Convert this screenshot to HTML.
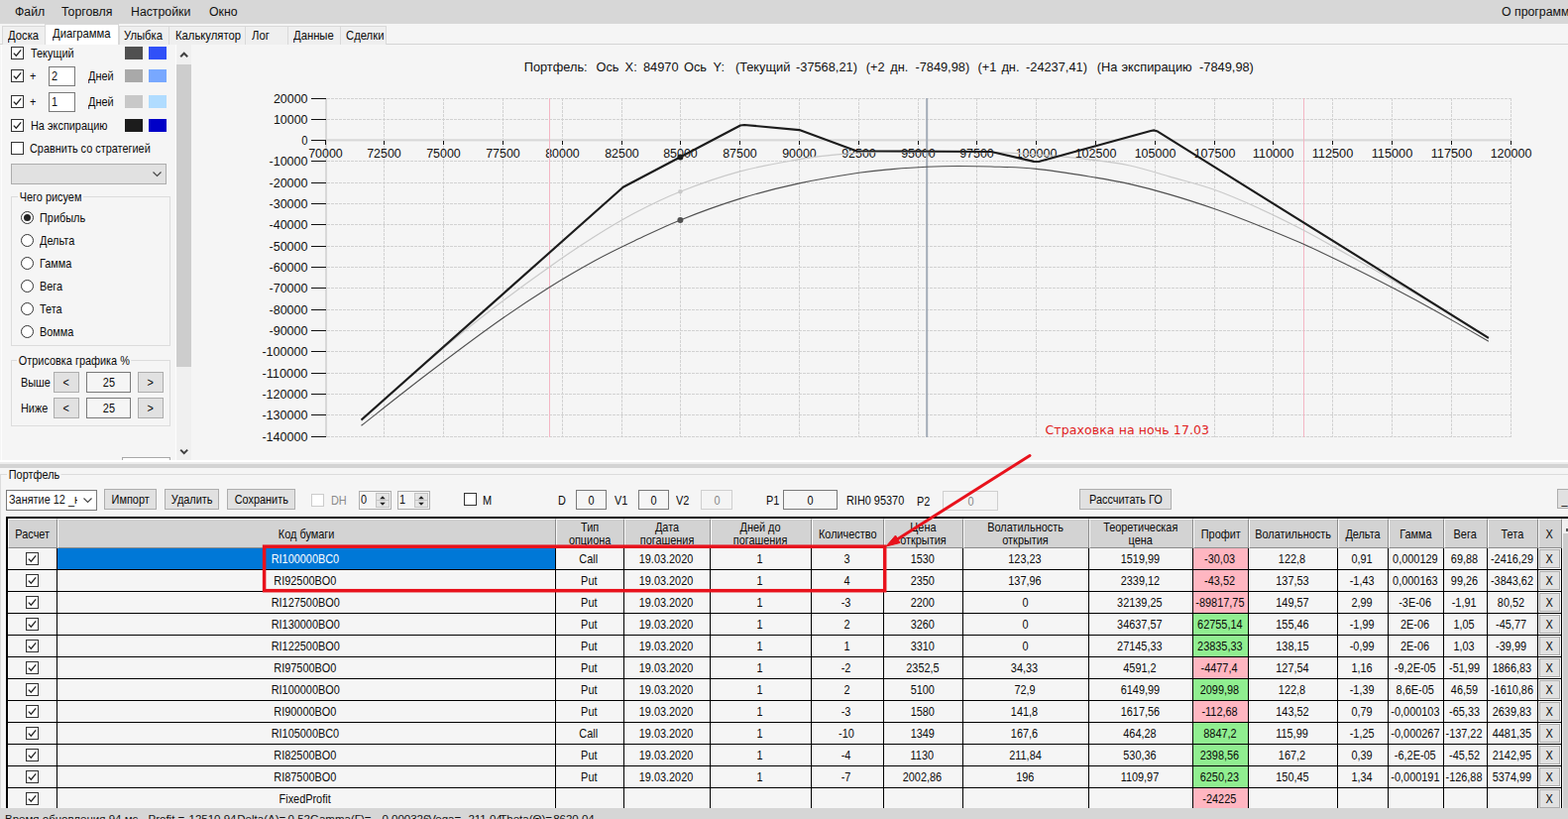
<!DOCTYPE html><html lang="ru"><head><meta charset="utf-8"><title>Options</title><style>
*{box-sizing:border-box;margin:0;padding:0}
html,body{width:1582px;height:826px;overflow:hidden;background:#f5f5f5}
body{position:relative;font-family:"Liberation Sans",sans-serif;font-size:11px;color:#111}
div{position:absolute;white-space:nowrap}
.t{font-size:12.4px;line-height:13px;color:#0a0a0a;transform:scaleX(.88);transform-origin:0 50%;margin-top:1px}
.tb{transform:scaleX(.91)}
.s{display:inline-block;transform:scaleX(.88);transform-origin:50% 50%;position:static}
.sl{display:inline-block;transform:scaleX(.88);transform-origin:0 50%;position:static}
.m{font-size:12.3px;line-height:14px;color:#111}
.cb{width:13px;height:13px;border:1px solid #333;background:#fff}
.cb.dis{border-color:#ccc}
.ck{position:absolute;left:-1px;top:-1px;width:13px;height:13px}
.sw{width:18px;height:12px}
.inp{background:#fff;border:1px solid #7a7a7a;font-size:12.4px;line-height:18px;padding-left:4px}
.inp.c{text-align:center;padding-left:0}
.inp.dis{border-color:#cfcfcf;color:#888;background:#f4f4f4}
.btn{background:#e1e1e1;border:1px solid #adadad;text-align:center;font-size:12.4px;line-height:20px;color:#0a0a0a}
.rd{width:13px;height:13px;border:1px solid #333;border-radius:50%;background:#fff}
.rd.on::after{content:"";position:absolute;left:2px;top:2px;width:7px;height:7px;border-radius:50%;background:#222}
.gb{border:1px solid #dcdcdc}
.gbl{background:#f5f5f5;padding:0 2px;font-size:12.4px;line-height:13px;color:#0a0a0a;transform:scaleX(.88);transform-origin:0 50%;margin-top:1px}
.hc{background:#d3d3d3;text-align:center;font-size:12.4px;line-height:12.6px;color:#0a0a0a;display:flex;align-items:center;justify-content:center;border-left:1px solid #fafafa;border-top:1px solid #fafafa;border-right:1px solid #8c8c8c;border-bottom:1px solid #8c8c8c}
.hc .s{position:relative;left:-0.5px;top:0.5px}
.c{text-align:center;font-size:12.4px;line-height:21px;color:#0a0a0a;background:#f5f5f5}
.tc .s{position:relative;left:-1px;top:1px}
.vl{background:#000;width:1px}
.hl{background:#000;height:1px}
</style></head><body>
<div class="" style="left:0px;top:0px;width:1582px;height:24px;background:#d7d7d7"></div>
<div class="m" style="left:15px;top:5px;">Файл</div>
<div class="m" style="left:62px;top:5px;">Торговля</div>
<div class="m" style="left:132px;top:5px;">Настройки</div>
<div class="m" style="left:211px;top:5px;">Окно</div>
<div class="m" style="left:1515px;top:5px;">О программе</div>
<div class="" style="left:0px;top:44px;width:1582px;height:1px;background:#d4d4d4"></div>
<div class="" style="left:2px;top:26px;width:44px;height:19px;background:#efefef;border:1px solid #d9d9d9;border-bottom:none"></div>
<div class="t tb" style="left:7.7px;top:29px;">Доска</div>
<div class="" style="left:120px;top:26px;width:51px;height:19px;background:#efefef;border:1px solid #d9d9d9;border-bottom:none"></div>
<div class="t tb" style="left:125px;top:29px;">Улыбка</div>
<div class="" style="left:170px;top:26px;width:78px;height:19px;background:#efefef;border:1px solid #d9d9d9;border-bottom:none"></div>
<div class="t tb" style="left:177.3px;top:29px;">Калькулятор</div>
<div class="" style="left:247px;top:26px;width:44px;height:19px;background:#efefef;border:1px solid #d9d9d9;border-bottom:none"></div>
<div class="t tb" style="left:254px;top:29px;">Лог</div>
<div class="" style="left:290px;top:26px;width:54px;height:19px;background:#efefef;border:1px solid #d9d9d9;border-bottom:none"></div>
<div class="t tb" style="left:296.3px;top:29px;">Данные</div>
<div class="" style="left:343px;top:26px;width:47px;height:19px;background:#efefef;border:1px solid #d9d9d9;border-bottom:none"></div>
<div class="t tb" style="left:348.5px;top:29px;">Сделки</div>
<div class="" style="left:45px;top:24px;width:75px;height:21px;background:#fff;border:1px solid #d9d9d9;border-bottom:none"></div>
<div class="t tb" style="left:53px;top:27px;">Диаграмма</div>
<div class="" style="left:0px;top:45px;width:195px;height:420px;background:#f5f5f5"></div>
<div class="" style="left:1px;top:45px;width:1px;height:420px;background:#fdfdfd"></div>
<div class="" style="left:177px;top:45px;width:1px;height:420px;background:#fdfdfd"></div>
<div class="cb" style="left:11px;top:47px"><svg class="ck" viewBox="0 0 13 13"><path d="M2.8 6.6 L5.3 9.2 L10.2 3.4" fill="none" stroke="#222" stroke-width="1.3"/></svg></div>
<div class="t" style="left:31px;top:47px;">Текущий</div>
<div class="cb" style="left:11px;top:70px"><svg class="ck" viewBox="0 0 13 13"><path d="M2.8 6.6 L5.3 9.2 L10.2 3.4" fill="none" stroke="#222" stroke-width="1.3"/></svg></div>
<div class="t" style="left:30px;top:70px;">+</div>
<div class="inp" style="left:49px;top:67px;width:27px;height:20px;padding-left:2px"><span class="sl">2</span></div>
<div class="t" style="left:89px;top:70px;">Дней</div>
<div class="cb" style="left:11px;top:96px"><svg class="ck" viewBox="0 0 13 13"><path d="M2.8 6.6 L5.3 9.2 L10.2 3.4" fill="none" stroke="#222" stroke-width="1.3"/></svg></div>
<div class="t" style="left:30px;top:96px;">+</div>
<div class="inp" style="left:49px;top:93px;width:27px;height:20px;padding-left:2px"><span class="sl">1</span></div>
<div class="t" style="left:89px;top:96px;">Дней</div>
<div class="cb" style="left:11px;top:120px"><svg class="ck" viewBox="0 0 13 13"><path d="M2.8 6.6 L5.3 9.2 L10.2 3.4" fill="none" stroke="#222" stroke-width="1.3"/></svg></div>
<div class="t" style="left:31px;top:120px;">На экспирацию</div>
<div class="cb" style="left:11px;top:143px"></div>
<div class="t" style="left:30px;top:143px;">Сравнить со стратегией</div>
<div class="" style="left:126px;top:47px;width:18px;height:13px;background:#505050"></div>
<div class="" style="left:150px;top:47px;width:18px;height:13px;background:#3050f8"></div>
<div class="" style="left:126px;top:70px;width:18px;height:13px;background:#a9a9a9"></div>
<div class="" style="left:150px;top:70px;width:18px;height:13px;background:#78a8ff"></div>
<div class="" style="left:126px;top:96px;width:18px;height:13px;background:#c8c8c8"></div>
<div class="" style="left:150px;top:96px;width:18px;height:13px;background:#b0dcff"></div>
<div class="" style="left:126px;top:120px;width:18px;height:13px;background:#1c1c1c"></div>
<div class="" style="left:150px;top:120px;width:18px;height:13px;background:#0000c8"></div>
<div class="" style="left:11px;top:165px;width:157px;height:21px;background:#e1e1e1;border:1px solid #adadad"></div>
<svg style="position:absolute;left:154px;top:173px" width="9" height="6"><path d="M0.5 0.5 L4.5 4.5 L8.5 0.5" fill="none" stroke="#444" stroke-width="1.1"/></svg>
<div class="gb" style="left:11px;top:198px;width:161px;height:151px;"></div>
<div class="gbl" style="left:18px;top:192px;">Чего рисуем</div>
<div class="rd on" style="left:21px;top:213.0px"></div>
<div class="t" style="left:40px;top:212.5px;">Прибыль</div>
<div class="rd" style="left:21px;top:236.0px"></div>
<div class="t" style="left:40px;top:235.5px;">Дельта</div>
<div class="rd" style="left:21px;top:259.0px"></div>
<div class="t" style="left:40px;top:258.5px;">Гамма</div>
<div class="rd" style="left:21px;top:282.0px"></div>
<div class="t" style="left:40px;top:281.5px;">Вега</div>
<div class="rd" style="left:21px;top:305.0px"></div>
<div class="t" style="left:40px;top:304.5px;">Тета</div>
<div class="rd" style="left:21px;top:328.0px"></div>
<div class="t" style="left:40px;top:327.5px;">Вомма</div>
<div class="gb" style="left:11px;top:363px;width:161px;height:67px;"></div>
<div class="gbl" style="left:17px;top:357px;">Отрисовка графика %</div>
<div class="t" style="left:21px;top:379px;">Выше</div>
<div class="btn" style="left:54px;top:375px;width:26px;height:21px;"><span class="s">&lt;</span></div>
<div class="inp c" style="left:87px;top:375px;width:45px;height:21px;background:#f5f5f5"><span class="s">25</span></div>
<div class="btn" style="left:139px;top:375px;width:26px;height:21px;"><span class="s">&gt;</span></div>
<div class="t" style="left:21px;top:405px;">Ниже</div>
<div class="btn" style="left:54px;top:401px;width:26px;height:21px;"><span class="s">&lt;</span></div>
<div class="inp c" style="left:87px;top:401px;width:45px;height:21px;background:#f5f5f5"><span class="s">25</span></div>
<div class="btn" style="left:139px;top:401px;width:26px;height:21px;"><span class="s">&gt;</span></div>
<div class="" style="left:123px;top:461px;width:49px;height:6px;background:#fff;border:1px solid #a8a8a8;border-bottom:none"></div>
<div class="" style="left:178px;top:45px;width:15px;height:419px;background:#f0f0f0"></div>
<div class="" style="left:178px;top:65px;width:15px;height:305px;background:#cdcdcd"></div>
<svg style="position:absolute;left:181px;top:51px" width="9" height="8"><path d="M1.2 6.2 L4.7 2.7 L8.2 6.2" fill="none" stroke="#404040" stroke-width="2"/></svg>
<svg style="position:absolute;left:181px;top:451px" width="9" height="8"><path d="M1.2 2.6 L4.7 6.1 L8.2 2.6" fill="none" stroke="#404040" stroke-width="2"/></svg>
<svg style="position:absolute;left:0;top:45px" width="1582" height="419" viewBox="0 45 1582 419" font-family="Liberation Sans, sans-serif"><path d="M387.5 99 V441 M447.5 99 V441 M507.5 99 V441 M567.5 99 V441 M627.5 99 V441 M686.5 99 V441 M746.5 99 V441 M806.5 99 V441 M866.5 99 V441 M926.5 99 V441 M985.5 99 V441 M1045.5 99 V441 M1105.5 99 V441 M1165.5 99 V441 M1225.5 99 V441 M1284.5 99 V441 M1344.5 99 V441 M1404.5 99 V441 M1464.5 99 V441 M1524.5 99 V441" stroke="#d2d2d2" stroke-width="1" stroke-dasharray="3 1" fill="none" shape-rendering="crispEdges"/><path d="M330 440.5 H1525 M330 418.5 H1525 M330 397.5 H1525 M330 376.5 H1525 M330 354.5 H1525 M330 333.5 H1525 M330 312.5 H1525 M330 290.5 H1525 M330 269.5 H1525 M330 248.5 H1525 M330 226.5 H1525 M330 205.5 H1525 M330 184.5 H1525 M330 162.5 H1525 M330 120.5 H1525 M330 99.5 H1525" stroke="#d2d2d2" stroke-width="1" stroke-dasharray="3 1" fill="none" shape-rendering="crispEdges"/><rect x="328" y="99" width="2" height="342" fill="#d8d8d8"/><rect x="328" y="140.3" width="1196.5" height="2.1" fill="#d8d8d8"/><path d="M314 440.5 H329 M314 418.5 H329 M314 397.5 H329 M314 376.5 H329 M314 354.5 H329 M314 333.5 H329 M314 312.5 H329 M314 290.5 H329 M314 269.5 H329 M314 248.5 H329 M314 226.5 H329 M314 205.5 H329 M314 184.5 H329 M314 162.5 H329 M314 141.5 H329 M314 120.5 H329 M314 99.5 H329 M328.5 141 V146 M387.5 142 V146 M447.5 142 V146 M507.5 142 V146 M567.5 142 V146 M627.5 142 V146 M686.5 142 V146 M746.5 142 V146 M806.5 142 V146 M866.5 142 V146 M926.5 142 V146 M985.5 142 V146 M1045.5 142 V146 M1105.5 142 V146 M1165.5 142 V146 M1225.5 142 V146 M1284.5 142 V146 M1344.5 142 V146 M1404.5 142 V146 M1464.5 142 V146 M1524.5 142 V146" stroke="#111" stroke-width="1" fill="none" shape-rendering="crispEdges"/><text x="310.5" y="445.3" font-size="13.4" text-anchor="end" fill="#111" textLength="46.1" lengthAdjust="spacingAndGlyphs">-140000</text><text x="310.5" y="423.3" font-size="13.4" text-anchor="end" fill="#111" textLength="46.1" lengthAdjust="spacingAndGlyphs">-130000</text><text x="310.5" y="402.3" font-size="13.4" text-anchor="end" fill="#111" textLength="46.1" lengthAdjust="spacingAndGlyphs">-120000</text><text x="310.5" y="381.3" font-size="13.4" text-anchor="end" fill="#111" textLength="46.1" lengthAdjust="spacingAndGlyphs">-110000</text><text x="310.5" y="359.3" font-size="13.4" text-anchor="end" fill="#111" textLength="46.1" lengthAdjust="spacingAndGlyphs">-100000</text><text x="310.5" y="338.3" font-size="13.4" text-anchor="end" fill="#111" textLength="39.0" lengthAdjust="spacingAndGlyphs">-90000</text><text x="310.5" y="317.3" font-size="13.4" text-anchor="end" fill="#111" textLength="39.0" lengthAdjust="spacingAndGlyphs">-80000</text><text x="310.5" y="295.3" font-size="13.4" text-anchor="end" fill="#111" textLength="39.0" lengthAdjust="spacingAndGlyphs">-70000</text><text x="310.5" y="274.3" font-size="13.4" text-anchor="end" fill="#111" textLength="39.0" lengthAdjust="spacingAndGlyphs">-60000</text><text x="310.5" y="253.3" font-size="13.4" text-anchor="end" fill="#111" textLength="39.0" lengthAdjust="spacingAndGlyphs">-50000</text><text x="310.5" y="231.3" font-size="13.4" text-anchor="end" fill="#111" textLength="39.0" lengthAdjust="spacingAndGlyphs">-40000</text><text x="310.5" y="210.3" font-size="13.4" text-anchor="end" fill="#111" textLength="39.0" lengthAdjust="spacingAndGlyphs">-30000</text><text x="310.5" y="189.3" font-size="13.4" text-anchor="end" fill="#111" textLength="39.0" lengthAdjust="spacingAndGlyphs">-20000</text><text x="310.5" y="167.3" font-size="13.4" text-anchor="end" fill="#111" textLength="39.0" lengthAdjust="spacingAndGlyphs">-10000</text><text x="310.5" y="146.3" font-size="13.4" text-anchor="end" fill="#111" textLength="6.2" lengthAdjust="spacingAndGlyphs">0</text><text x="310.5" y="125.3" font-size="13.4" text-anchor="end" fill="#111" textLength="34.6" lengthAdjust="spacingAndGlyphs">10000</text><text x="310.5" y="104.3" font-size="13.4" text-anchor="end" fill="#111" textLength="34.6" lengthAdjust="spacingAndGlyphs">20000</text><text x="328.5" y="158.9" font-size="13.4" text-anchor="middle" fill="#111" textLength="34.6" lengthAdjust="spacingAndGlyphs">70000</text><text x="387.5" y="158.9" font-size="13.4" text-anchor="middle" fill="#111" textLength="34.6" lengthAdjust="spacingAndGlyphs">72500</text><text x="447.5" y="158.9" font-size="13.4" text-anchor="middle" fill="#111" textLength="34.6" lengthAdjust="spacingAndGlyphs">75000</text><text x="507.5" y="158.9" font-size="13.4" text-anchor="middle" fill="#111" textLength="34.6" lengthAdjust="spacingAndGlyphs">77500</text><text x="567.5" y="158.9" font-size="13.4" text-anchor="middle" fill="#111" textLength="34.6" lengthAdjust="spacingAndGlyphs">80000</text><text x="627.5" y="158.9" font-size="13.4" text-anchor="middle" fill="#111" textLength="34.6" lengthAdjust="spacingAndGlyphs">82500</text><text x="686.5" y="158.9" font-size="13.4" text-anchor="middle" fill="#111" textLength="34.6" lengthAdjust="spacingAndGlyphs">85000</text><text x="746.5" y="158.9" font-size="13.4" text-anchor="middle" fill="#111" textLength="34.6" lengthAdjust="spacingAndGlyphs">87500</text><text x="806.5" y="158.9" font-size="13.4" text-anchor="middle" fill="#111" textLength="34.6" lengthAdjust="spacingAndGlyphs">90000</text><text x="866.5" y="158.9" font-size="13.4" text-anchor="middle" fill="#111" textLength="34.6" lengthAdjust="spacingAndGlyphs">92500</text><text x="926.5" y="158.9" font-size="13.4" text-anchor="middle" fill="#111" textLength="34.6" lengthAdjust="spacingAndGlyphs">95000</text><text x="985.5" y="158.9" font-size="13.4" text-anchor="middle" fill="#111" textLength="34.6" lengthAdjust="spacingAndGlyphs">97500</text><text x="1045.5" y="158.9" font-size="13.4" text-anchor="middle" fill="#111" textLength="41.7" lengthAdjust="spacingAndGlyphs">100000</text><text x="1105.5" y="158.9" font-size="13.4" text-anchor="middle" fill="#111" textLength="41.7" lengthAdjust="spacingAndGlyphs">102500</text><text x="1165.5" y="158.9" font-size="13.4" text-anchor="middle" fill="#111" textLength="41.7" lengthAdjust="spacingAndGlyphs">105000</text><text x="1225.5" y="158.9" font-size="13.4" text-anchor="middle" fill="#111" textLength="41.7" lengthAdjust="spacingAndGlyphs">107500</text><text x="1284.5" y="158.9" font-size="13.4" text-anchor="middle" fill="#111" textLength="41.7" lengthAdjust="spacingAndGlyphs">110000</text><text x="1344.5" y="158.9" font-size="13.4" text-anchor="middle" fill="#111" textLength="41.7" lengthAdjust="spacingAndGlyphs">112500</text><text x="1404.5" y="158.9" font-size="13.4" text-anchor="middle" fill="#111" textLength="41.7" lengthAdjust="spacingAndGlyphs">115000</text><text x="1464.5" y="158.9" font-size="13.4" text-anchor="middle" fill="#111" textLength="41.7" lengthAdjust="spacingAndGlyphs">117500</text><text x="1524.5" y="158.9" font-size="13.4" text-anchor="middle" fill="#111" textLength="41.7" lengthAdjust="spacingAndGlyphs">120000</text><path d="M554.5 99 V441 M1315.5 99 V441" stroke="#f4b6c4" stroke-width="1" shape-rendering="crispEdges"/><rect x="934.2" y="99" width="2" height="342" fill="#a4acb8"/><path d="M364.5 424.5 C376.8 413.6 415.4 378.2 438.0 359.0 C460.6 339.8 480.6 324.0 500.0 309.0 C519.5 294.0 538.0 280.6 554.7 268.9 C571.4 257.1 585.8 247.5 600.0 238.5 C614.2 229.5 625.6 222.6 640.0 215.0 C654.4 207.4 668.6 200.2 686.4 193.2 C704.2 186.2 726.6 178.3 746.6 172.9 C766.6 167.5 790.6 163.5 806.5 160.7 C822.4 157.9 832.1 157.3 842.0 156.2 C851.9 155.1 856.3 154.4 866.0 154.0 C875.7 153.6 877.7 153.6 900.0 153.5 C922.3 153.4 975.0 153.2 1000.0 153.6 C1025.0 154.0 1032.4 154.8 1050.0 156.2 C1067.6 157.5 1090.6 159.9 1105.6 161.7 C1120.6 163.5 1127.6 164.3 1140.0 167.0 C1152.4 169.7 1165.8 174.0 1180.0 178.1 C1194.2 182.2 1210.0 186.0 1225.0 191.3 C1240.0 196.6 1255.0 203.2 1270.0 210.0 C1285.0 216.8 1300.3 224.4 1315.3 232.2 C1330.3 240.0 1344.6 248.4 1360.0 257.0 C1375.4 265.6 1392.5 275.2 1407.5 284.0 C1422.5 292.8 1434.3 299.9 1450.0 309.5 C1465.7 319.1 1493.2 336.2 1501.9 341.5" stroke="#c9c9c9" stroke-width="1.2" fill="none"/><path d="M364.5 429.3 C375.4 420.8 407.4 395.2 430.0 378.0 C452.6 360.8 479.2 340.8 500.0 326.0 C520.8 311.2 538.0 300.0 554.7 289.5 C571.4 279.0 585.8 270.8 600.0 263.0 C614.2 255.2 625.6 249.8 640.0 243.0 C654.4 236.2 668.6 229.0 686.4 221.9 C704.2 214.8 726.6 206.6 746.6 200.4 C766.6 194.2 786.5 189.2 806.5 184.9 C826.5 180.6 850.9 176.7 866.5 174.3 C882.1 171.9 888.6 171.6 900.0 170.6 C911.4 169.6 923.8 168.7 935.0 168.2 C946.2 167.7 956.2 167.5 967.0 167.5 C977.8 167.5 986.9 167.5 1000.0 168.0 C1013.1 168.5 1028.0 168.6 1045.6 170.4 C1063.2 172.2 1089.9 176.6 1105.6 179.1 C1121.3 181.6 1127.6 182.8 1140.0 185.6 C1152.4 188.4 1165.8 191.9 1180.0 196.1 C1194.2 200.2 1210.0 205.3 1225.0 210.5 C1240.0 215.7 1255.0 221.5 1270.0 227.5 C1285.0 233.5 1300.3 239.6 1315.3 246.3 C1330.3 253.0 1344.6 260.0 1360.0 267.5 C1375.4 275.0 1392.5 283.7 1407.5 291.5 C1422.5 299.3 1434.3 305.7 1450.0 314.5 C1465.7 323.3 1493.2 339.2 1501.9 344.2" stroke="#505050" stroke-width="1.1" fill="none"/><path d="M364.5 423.5 L628.7 188.8 L747 126.5 L751 126 L806.5 131.1 L864 152.2 L1000 153 L1043 162.9 L1048 163 L1161 132 L1164.5 131.4 L1168 132.6 L1501.9 340.8" stroke="#1c1c1c" stroke-width="2.15" fill="none" stroke-linejoin="round"/><circle cx="686.4" cy="158.5" r="3" fill="#1c1c1c"/><circle cx="686.4" cy="193.2" r="2.2" fill="#c9c9c9"/><circle cx="686.4" cy="221.9" r="3" fill="#505050"/><text id="ttl" y="71.8" font-size="12.8" fill="#111"><tspan x="528.7">Портфель:</tspan> <tspan x="601.5">Ось</tspan> <tspan x="630.6">X:</tspan> <tspan x="649.0">84970</tspan> <tspan x="690.0">Ось</tspan> <tspan x="719.6">Y:</tspan> <tspan x="741.9">(Текущий</tspan> <tspan x="803.0">-37568,21)</tspan> <tspan x="873.7">(+2</tspan> <tspan x="898.3">дн.</tspan> <tspan x="923.4">-7849,98)</tspan> <tspan x="986.6">(+1</tspan> <tspan x="1010.4">дн.</tspan> <tspan x="1035.0">-24237,41)</tspan> <tspan x="1106.7">(На</tspan> <tspan x="1131.6">экспирацию</tspan> <tspan x="1210.1">-7849,98)</tspan></text><text x="1054.5" y="437.8" font-size="12.5" fill="#e01d1d" textLength="165.5" font-family="DejaVu Sans, Liberation Sans, sans-serif">Страховка на ночь 17.03</text></svg>
<div class="" style="left:0px;top:464px;width:1582px;height:2px;background:#fff"></div>
<div class="" style="left:0px;top:466px;width:1582px;height:2px;background:#ececec"></div>
<div class="" style="left:0px;top:468px;width:1582px;height:4px;background:#d3d3d3"></div>
<div class="" style="left:0px;top:472px;width:1582px;height:345px;background:#f5f5f5"></div>
<div class="gb" style="left:0px;top:478px;width:1600px;height:345px;border-color:#dcdcdc"></div>
<div class="gbl" style="left:7px;top:472px;">Портфель</div>
<div class="inp" style="left:6px;top:494px;width:92px;height:21px;line-height:19px;padding-left:2px"><span class="sl">Занятие 12 _н</span></div>
<div class="" style="left:78px;top:495px;width:19px;height:19px;background:#fff"></div>
<svg style="position:absolute;left:84px;top:502px" width="9" height="6"><path d="M0.5 0.5 L4.5 4.5 L8.5 0.5" fill="none" stroke="#444" stroke-width="1.1"/></svg>
<div class="btn" style="left:105px;top:493px;width:53px;height:21px;"><span class="s">Импорт</span></div>
<div class="btn" style="left:166px;top:493px;width:55px;height:21px;"><span class="s">Удалить</span></div>
<div class="btn" style="left:229px;top:493px;width:69px;height:21px;"><span class="s">Сохранить</span></div>
<div class="cb dis" style="left:314px;top:498px"></div>
<div class="t" style="left:334px;top:498px;color:#8a8a8a">DH</div>
<div class="inp" style="left:362px;top:495px;width:33px;height:19px;line-height:17px;padding-left:1px;border-color:#adadad;background:#f5f5f5"><span class="sl">0</span></div>
<div class="" style="left:379px;top:497px;width:14px;height:15px;background:#e4e4e4;border:1px solid #c4c4c4"></div>
<svg style="position:absolute;left:382px;top:499px" width="8" height="12"><path d="M1.2 4.3 L4 1.2 L6.8 4.3 Z M1.2 7.7 L4 10.8 L6.8 7.7 Z" fill="#222"/></svg>
<div class="" style="left:379px;top:504px;width:14px;height:1px;background:#c4c4c4"></div>
<div class="inp" style="left:401px;top:495px;width:33px;height:19px;line-height:17px;padding-left:1px;border-color:#adadad;background:#f5f5f5"><span class="sl">1</span></div>
<div class="" style="left:418px;top:497px;width:14px;height:15px;background:#e4e4e4;border:1px solid #c4c4c4"></div>
<svg style="position:absolute;left:421px;top:499px" width="8" height="12"><path d="M1.2 4.3 L4 1.2 L6.8 4.3 Z M1.2 7.7 L4 10.8 L6.8 7.7 Z" fill="#222"/></svg>
<div class="" style="left:418px;top:504px;width:14px;height:1px;background:#c4c4c4"></div>
<div class="cb" style="left:468px;top:497px"></div>
<div class="t" style="left:487px;top:498px;">M</div>
<div class="t" style="left:563px;top:498px;">D</div>
<div class="inp c" style="left:581px;top:494px;width:31px;height:20px;"><span class="s">0</span></div>
<div class="t" style="left:620px;top:498px;">V1</div>
<div class="inp c" style="left:644px;top:494px;width:31px;height:20px;"><span class="s">0</span></div>
<div class="t" style="left:682px;top:498px;">V2</div>
<div class="inp c dis" style="left:707px;top:494px;width:32px;height:20px;"><span class="s">0</span></div>
<div class="t" style="left:773px;top:498px;">P1</div>
<div class="inp c" style="left:790px;top:494px;width:55px;height:20px;"><span class="s">0</span></div>
<div class="t" style="left:854px;top:498px;">RIH0 95370</div>
<div class="t" style="left:925px;top:499px;">P2</div>
<div class="inp c dis" style="left:951px;top:495px;width:56px;height:20px;"><span class="s">0</span></div>
<div class="btn" style="left:1089px;top:493px;width:93px;height:21px;"><span class="s">Рассчитать ГО</span></div>
<div class="btn" style="left:1571px;top:493px;width:20px;height:20px;text-align:left;padding-left:3px"><span class="s">_</span></div>
<div class="" style="left:6px;top:521px;width:1576px;height:300px;background:#f5f5f5"></div>
<div class="" style="left:6px;top:521px;width:1576px;height:2px;background:#000"></div>
<div class="" style="left:6px;top:521px;width:2px;height:300px;background:#000"></div>
<div class="" style="left:8px;top:523px;width:1568px;height:30px;background:#d3d3d3"></div>
<div class="hc" style="left:8px;top:523px;width:50px;height:30px;"><span class="s" style=top:1.5px>Расчет</span></div>
<div class="hc" style="left:58px;top:523px;width:503px;height:30px;"><span class="s" style=top:1.5px>Код бумаги</span></div>
<div class="hc" style="left:561px;top:523px;width:69px;height:30px;"><span class="s">Тип<br>опциона</span></div>
<div class="hc" style="left:630px;top:523px;width:87px;height:30px;"><span class="s">Дата<br>погашения</span></div>
<div class="hc" style="left:717px;top:523px;width:102px;height:30px;"><span class="s">Дней до<br>погашения</span></div>
<div class="hc" style="left:819px;top:523px;width:73px;height:30px;"><span class="s" style=top:1.5px>Количество</span></div>
<div class="hc" style="left:892px;top:523px;width:80px;height:30px;"><span class="s">Цена<br>открытия</span></div>
<div class="hc" style="left:972px;top:523px;width:127px;height:30px;"><span class="s">Волатильность<br>открытия</span></div>
<div class="hc" style="left:1099px;top:523px;width:105px;height:30px;"><span class="s">Теоретическая<br>цена</span></div>
<div class="hc" style="left:1204px;top:523px;width:56px;height:30px;"><span class="s" style=top:1.5px>Профит</span></div>
<div class="hc" style="left:1260px;top:523px;width:90px;height:30px;"><span class="s" style=top:1.5px>Волатильность</span></div>
<div class="hc" style="left:1350px;top:523px;width:51px;height:30px;"><span class="s" style=top:1.5px>Дельта</span></div>
<div class="hc" style="left:1401px;top:523px;width:56px;height:30px;"><span class="s" style=top:1.5px>Гамма</span></div>
<div class="hc" style="left:1457px;top:523px;width:44px;height:30px;"><span class="s" style=top:1.5px>Вега</span></div>
<div class="hc" style="left:1501px;top:523px;width:51px;height:30px;"><span class="s" style=top:1.5px>Тета</span></div>
<div class="hc" style="left:1552px;top:523px;width:24px;height:30px;"><span class="s" style=top:1.5px>X</span></div>
<div class="cb" style="left:26px;top:557px"><svg class="ck" viewBox="0 0 13 13"><path d="M2.8 6.6 L5.3 9.2 L10.2 3.4" fill="none" stroke="#222" stroke-width="1.3"/></svg></div>
<div class="c tc" style="left:58px;top:553px;width:502px;height:21px;background:#0078d7;color:#fff;"><span class="s">RI100000BC0</span></div>
<div class="c tc" style="left:561px;top:553px;width:68px;height:21px;"><span class="s">Call</span></div>
<div class="c tc" style="left:630px;top:553px;width:86px;height:21px;"><span class="s">19.03.2020</span></div>
<div class="c tc" style="left:717px;top:553px;width:101px;height:21px;"><span class="s">1</span></div>
<div class="c tc" style="left:819px;top:553px;width:72px;height:21px;"><span class="s">3</span></div>
<div class="c tc" style="left:892px;top:553px;width:79px;height:21px;"><span class="s">1530</span></div>
<div class="c tc" style="left:972px;top:553px;width:126px;height:21px;"><span class="s">123,23</span></div>
<div class="c tc" style="left:1099px;top:553px;width:104px;height:21px;"><span class="s">1519,99</span></div>
<div class="c tc" style="left:1204px;top:553px;width:55px;height:21px;background:#ffb6c1;"><span class="s">-30,03</span></div>
<div class="c tc" style="left:1260px;top:553px;width:89px;height:21px;"><span class="s">122,8</span></div>
<div class="c tc" style="left:1350px;top:553px;width:50px;height:21px;"><span class="s">0,91</span></div>
<div class="c tc" style="left:1401px;top:553px;width:55px;height:21px;"><span class="s">0,000129</span></div>
<div class="c tc" style="left:1457px;top:553px;width:43px;height:21px;"><span class="s">69,88</span></div>
<div class="c tc" style="left:1501px;top:553px;width:50px;height:21px;"><span class="s">-2416,29</span></div>
<div class="btn" style="left:1553px;top:554px;width:21px;height:19px;line-height:18px"><span class="s">X</span></div>
<div class="hl" style="left:8px;top:574px;width:1568px;height:1px;"></div>
<div class="cb" style="left:26px;top:579px"><svg class="ck" viewBox="0 0 13 13"><path d="M2.8 6.6 L5.3 9.2 L10.2 3.4" fill="none" stroke="#222" stroke-width="1.3"/></svg></div>
<div class="c tc" style="left:58px;top:575px;width:502px;height:21px;"><span class="s">RI92500BO0</span></div>
<div class="c tc" style="left:561px;top:575px;width:68px;height:21px;"><span class="s">Put</span></div>
<div class="c tc" style="left:630px;top:575px;width:86px;height:21px;"><span class="s">19.03.2020</span></div>
<div class="c tc" style="left:717px;top:575px;width:101px;height:21px;"><span class="s">1</span></div>
<div class="c tc" style="left:819px;top:575px;width:72px;height:21px;"><span class="s">4</span></div>
<div class="c tc" style="left:892px;top:575px;width:79px;height:21px;"><span class="s">2350</span></div>
<div class="c tc" style="left:972px;top:575px;width:126px;height:21px;"><span class="s">137,96</span></div>
<div class="c tc" style="left:1099px;top:575px;width:104px;height:21px;"><span class="s">2339,12</span></div>
<div class="c tc" style="left:1204px;top:575px;width:55px;height:21px;background:#ffb6c1;"><span class="s">-43,52</span></div>
<div class="c tc" style="left:1260px;top:575px;width:89px;height:21px;"><span class="s">137,53</span></div>
<div class="c tc" style="left:1350px;top:575px;width:50px;height:21px;"><span class="s">-1,43</span></div>
<div class="c tc" style="left:1401px;top:575px;width:55px;height:21px;"><span class="s">0,000163</span></div>
<div class="c tc" style="left:1457px;top:575px;width:43px;height:21px;"><span class="s">99,26</span></div>
<div class="c tc" style="left:1501px;top:575px;width:50px;height:21px;"><span class="s">-3843,62</span></div>
<div class="btn" style="left:1553px;top:576px;width:21px;height:19px;line-height:18px"><span class="s">X</span></div>
<div class="hl" style="left:8px;top:596px;width:1568px;height:1px;"></div>
<div class="cb" style="left:26px;top:601px"><svg class="ck" viewBox="0 0 13 13"><path d="M2.8 6.6 L5.3 9.2 L10.2 3.4" fill="none" stroke="#222" stroke-width="1.3"/></svg></div>
<div class="c tc" style="left:58px;top:597px;width:502px;height:21px;"><span class="s">RI127500BO0</span></div>
<div class="c tc" style="left:561px;top:597px;width:68px;height:21px;"><span class="s">Put</span></div>
<div class="c tc" style="left:630px;top:597px;width:86px;height:21px;"><span class="s">19.03.2020</span></div>
<div class="c tc" style="left:717px;top:597px;width:101px;height:21px;"><span class="s">1</span></div>
<div class="c tc" style="left:819px;top:597px;width:72px;height:21px;"><span class="s">-3</span></div>
<div class="c tc" style="left:892px;top:597px;width:79px;height:21px;"><span class="s">2200</span></div>
<div class="c tc" style="left:972px;top:597px;width:126px;height:21px;"><span class="s">0</span></div>
<div class="c tc" style="left:1099px;top:597px;width:104px;height:21px;"><span class="s">32139,25</span></div>
<div class="c tc" style="left:1204px;top:597px;width:55px;height:21px;background:#ffb6c1;"><span class="s">-89817,75</span></div>
<div class="c tc" style="left:1260px;top:597px;width:89px;height:21px;"><span class="s">149,57</span></div>
<div class="c tc" style="left:1350px;top:597px;width:50px;height:21px;"><span class="s">2,99</span></div>
<div class="c tc" style="left:1401px;top:597px;width:55px;height:21px;"><span class="s">-3E-06</span></div>
<div class="c tc" style="left:1457px;top:597px;width:43px;height:21px;"><span class="s">-1,91</span></div>
<div class="c tc" style="left:1501px;top:597px;width:50px;height:21px;"><span class="s">80,52</span></div>
<div class="btn" style="left:1553px;top:598px;width:21px;height:19px;line-height:18px"><span class="s">X</span></div>
<div class="hl" style="left:8px;top:618px;width:1568px;height:1px;"></div>
<div class="cb" style="left:26px;top:623px"><svg class="ck" viewBox="0 0 13 13"><path d="M2.8 6.6 L5.3 9.2 L10.2 3.4" fill="none" stroke="#222" stroke-width="1.3"/></svg></div>
<div class="c tc" style="left:58px;top:619px;width:502px;height:21px;"><span class="s">RI130000BO0</span></div>
<div class="c tc" style="left:561px;top:619px;width:68px;height:21px;"><span class="s">Put</span></div>
<div class="c tc" style="left:630px;top:619px;width:86px;height:21px;"><span class="s">19.03.2020</span></div>
<div class="c tc" style="left:717px;top:619px;width:101px;height:21px;"><span class="s">1</span></div>
<div class="c tc" style="left:819px;top:619px;width:72px;height:21px;"><span class="s">2</span></div>
<div class="c tc" style="left:892px;top:619px;width:79px;height:21px;"><span class="s">3260</span></div>
<div class="c tc" style="left:972px;top:619px;width:126px;height:21px;"><span class="s">0</span></div>
<div class="c tc" style="left:1099px;top:619px;width:104px;height:21px;"><span class="s">34637,57</span></div>
<div class="c tc" style="left:1204px;top:619px;width:55px;height:21px;background:#90ee90;"><span class="s">62755,14</span></div>
<div class="c tc" style="left:1260px;top:619px;width:89px;height:21px;"><span class="s">155,46</span></div>
<div class="c tc" style="left:1350px;top:619px;width:50px;height:21px;"><span class="s">-1,99</span></div>
<div class="c tc" style="left:1401px;top:619px;width:55px;height:21px;"><span class="s">2E-06</span></div>
<div class="c tc" style="left:1457px;top:619px;width:43px;height:21px;"><span class="s">1,05</span></div>
<div class="c tc" style="left:1501px;top:619px;width:50px;height:21px;"><span class="s">-45,77</span></div>
<div class="btn" style="left:1553px;top:620px;width:21px;height:19px;line-height:18px"><span class="s">X</span></div>
<div class="hl" style="left:8px;top:640px;width:1568px;height:1px;"></div>
<div class="cb" style="left:26px;top:645px"><svg class="ck" viewBox="0 0 13 13"><path d="M2.8 6.6 L5.3 9.2 L10.2 3.4" fill="none" stroke="#222" stroke-width="1.3"/></svg></div>
<div class="c tc" style="left:58px;top:641px;width:502px;height:21px;"><span class="s">RI122500BO0</span></div>
<div class="c tc" style="left:561px;top:641px;width:68px;height:21px;"><span class="s">Put</span></div>
<div class="c tc" style="left:630px;top:641px;width:86px;height:21px;"><span class="s">19.03.2020</span></div>
<div class="c tc" style="left:717px;top:641px;width:101px;height:21px;"><span class="s">1</span></div>
<div class="c tc" style="left:819px;top:641px;width:72px;height:21px;"><span class="s">1</span></div>
<div class="c tc" style="left:892px;top:641px;width:79px;height:21px;"><span class="s">3310</span></div>
<div class="c tc" style="left:972px;top:641px;width:126px;height:21px;"><span class="s">0</span></div>
<div class="c tc" style="left:1099px;top:641px;width:104px;height:21px;"><span class="s">27145,33</span></div>
<div class="c tc" style="left:1204px;top:641px;width:55px;height:21px;background:#90ee90;"><span class="s">23835,33</span></div>
<div class="c tc" style="left:1260px;top:641px;width:89px;height:21px;"><span class="s">138,15</span></div>
<div class="c tc" style="left:1350px;top:641px;width:50px;height:21px;"><span class="s">-0,99</span></div>
<div class="c tc" style="left:1401px;top:641px;width:55px;height:21px;"><span class="s">2E-06</span></div>
<div class="c tc" style="left:1457px;top:641px;width:43px;height:21px;"><span class="s">1,03</span></div>
<div class="c tc" style="left:1501px;top:641px;width:50px;height:21px;"><span class="s">-39,99</span></div>
<div class="btn" style="left:1553px;top:642px;width:21px;height:19px;line-height:18px"><span class="s">X</span></div>
<div class="hl" style="left:8px;top:662px;width:1568px;height:1px;"></div>
<div class="cb" style="left:26px;top:667px"><svg class="ck" viewBox="0 0 13 13"><path d="M2.8 6.6 L5.3 9.2 L10.2 3.4" fill="none" stroke="#222" stroke-width="1.3"/></svg></div>
<div class="c tc" style="left:58px;top:663px;width:502px;height:21px;"><span class="s">RI97500BO0</span></div>
<div class="c tc" style="left:561px;top:663px;width:68px;height:21px;"><span class="s">Put</span></div>
<div class="c tc" style="left:630px;top:663px;width:86px;height:21px;"><span class="s">19.03.2020</span></div>
<div class="c tc" style="left:717px;top:663px;width:101px;height:21px;"><span class="s">1</span></div>
<div class="c tc" style="left:819px;top:663px;width:72px;height:21px;"><span class="s">-2</span></div>
<div class="c tc" style="left:892px;top:663px;width:79px;height:21px;"><span class="s">2352,5</span></div>
<div class="c tc" style="left:972px;top:663px;width:126px;height:21px;"><span class="s">34,33</span></div>
<div class="c tc" style="left:1099px;top:663px;width:104px;height:21px;"><span class="s">4591,2</span></div>
<div class="c tc" style="left:1204px;top:663px;width:55px;height:21px;background:#ffb6c1;"><span class="s">-4477,4</span></div>
<div class="c tc" style="left:1260px;top:663px;width:89px;height:21px;"><span class="s">127,54</span></div>
<div class="c tc" style="left:1350px;top:663px;width:50px;height:21px;"><span class="s">1,16</span></div>
<div class="c tc" style="left:1401px;top:663px;width:55px;height:21px;"><span class="s">-9,2E-05</span></div>
<div class="c tc" style="left:1457px;top:663px;width:43px;height:21px;"><span class="s">-51,99</span></div>
<div class="c tc" style="left:1501px;top:663px;width:50px;height:21px;"><span class="s">1866,83</span></div>
<div class="btn" style="left:1553px;top:664px;width:21px;height:19px;line-height:18px"><span class="s">X</span></div>
<div class="hl" style="left:8px;top:684px;width:1568px;height:1px;"></div>
<div class="cb" style="left:26px;top:689px"><svg class="ck" viewBox="0 0 13 13"><path d="M2.8 6.6 L5.3 9.2 L10.2 3.4" fill="none" stroke="#222" stroke-width="1.3"/></svg></div>
<div class="c tc" style="left:58px;top:685px;width:502px;height:21px;"><span class="s">RI100000BO0</span></div>
<div class="c tc" style="left:561px;top:685px;width:68px;height:21px;"><span class="s">Put</span></div>
<div class="c tc" style="left:630px;top:685px;width:86px;height:21px;"><span class="s">19.03.2020</span></div>
<div class="c tc" style="left:717px;top:685px;width:101px;height:21px;"><span class="s">1</span></div>
<div class="c tc" style="left:819px;top:685px;width:72px;height:21px;"><span class="s">2</span></div>
<div class="c tc" style="left:892px;top:685px;width:79px;height:21px;"><span class="s">5100</span></div>
<div class="c tc" style="left:972px;top:685px;width:126px;height:21px;"><span class="s">72,9</span></div>
<div class="c tc" style="left:1099px;top:685px;width:104px;height:21px;"><span class="s">6149,99</span></div>
<div class="c tc" style="left:1204px;top:685px;width:55px;height:21px;background:#90ee90;"><span class="s">2099,98</span></div>
<div class="c tc" style="left:1260px;top:685px;width:89px;height:21px;"><span class="s">122,8</span></div>
<div class="c tc" style="left:1350px;top:685px;width:50px;height:21px;"><span class="s">-1,39</span></div>
<div class="c tc" style="left:1401px;top:685px;width:55px;height:21px;"><span class="s">8,6E-05</span></div>
<div class="c tc" style="left:1457px;top:685px;width:43px;height:21px;"><span class="s">46,59</span></div>
<div class="c tc" style="left:1501px;top:685px;width:50px;height:21px;"><span class="s">-1610,86</span></div>
<div class="btn" style="left:1553px;top:686px;width:21px;height:19px;line-height:18px"><span class="s">X</span></div>
<div class="hl" style="left:8px;top:706px;width:1568px;height:1px;"></div>
<div class="cb" style="left:26px;top:711px"><svg class="ck" viewBox="0 0 13 13"><path d="M2.8 6.6 L5.3 9.2 L10.2 3.4" fill="none" stroke="#222" stroke-width="1.3"/></svg></div>
<div class="c tc" style="left:58px;top:707px;width:502px;height:21px;"><span class="s">RI90000BO0</span></div>
<div class="c tc" style="left:561px;top:707px;width:68px;height:21px;"><span class="s">Put</span></div>
<div class="c tc" style="left:630px;top:707px;width:86px;height:21px;"><span class="s">19.03.2020</span></div>
<div class="c tc" style="left:717px;top:707px;width:101px;height:21px;"><span class="s">1</span></div>
<div class="c tc" style="left:819px;top:707px;width:72px;height:21px;"><span class="s">-3</span></div>
<div class="c tc" style="left:892px;top:707px;width:79px;height:21px;"><span class="s">1580</span></div>
<div class="c tc" style="left:972px;top:707px;width:126px;height:21px;"><span class="s">141,8</span></div>
<div class="c tc" style="left:1099px;top:707px;width:104px;height:21px;"><span class="s">1617,56</span></div>
<div class="c tc" style="left:1204px;top:707px;width:55px;height:21px;background:#ffb6c1;"><span class="s">-112,68</span></div>
<div class="c tc" style="left:1260px;top:707px;width:89px;height:21px;"><span class="s">143,52</span></div>
<div class="c tc" style="left:1350px;top:707px;width:50px;height:21px;"><span class="s">0,79</span></div>
<div class="c tc" style="left:1401px;top:707px;width:55px;height:21px;"><span class="s">-0,000103</span></div>
<div class="c tc" style="left:1457px;top:707px;width:43px;height:21px;"><span class="s">-65,33</span></div>
<div class="c tc" style="left:1501px;top:707px;width:50px;height:21px;"><span class="s">2639,83</span></div>
<div class="btn" style="left:1553px;top:708px;width:21px;height:19px;line-height:18px"><span class="s">X</span></div>
<div class="hl" style="left:8px;top:728px;width:1568px;height:1px;"></div>
<div class="cb" style="left:26px;top:733px"><svg class="ck" viewBox="0 0 13 13"><path d="M2.8 6.6 L5.3 9.2 L10.2 3.4" fill="none" stroke="#222" stroke-width="1.3"/></svg></div>
<div class="c tc" style="left:58px;top:729px;width:502px;height:21px;"><span class="s">RI105000BC0</span></div>
<div class="c tc" style="left:561px;top:729px;width:68px;height:21px;"><span class="s">Call</span></div>
<div class="c tc" style="left:630px;top:729px;width:86px;height:21px;"><span class="s">19.03.2020</span></div>
<div class="c tc" style="left:717px;top:729px;width:101px;height:21px;"><span class="s">1</span></div>
<div class="c tc" style="left:819px;top:729px;width:72px;height:21px;"><span class="s">-10</span></div>
<div class="c tc" style="left:892px;top:729px;width:79px;height:21px;"><span class="s">1349</span></div>
<div class="c tc" style="left:972px;top:729px;width:126px;height:21px;"><span class="s">167,6</span></div>
<div class="c tc" style="left:1099px;top:729px;width:104px;height:21px;"><span class="s">464,28</span></div>
<div class="c tc" style="left:1204px;top:729px;width:55px;height:21px;background:#90ee90;"><span class="s">8847,2</span></div>
<div class="c tc" style="left:1260px;top:729px;width:89px;height:21px;"><span class="s">115,99</span></div>
<div class="c tc" style="left:1350px;top:729px;width:50px;height:21px;"><span class="s">-1,25</span></div>
<div class="c tc" style="left:1401px;top:729px;width:55px;height:21px;"><span class="s">-0,000267</span></div>
<div class="c tc" style="left:1457px;top:729px;width:43px;height:21px;"><span class="s">-137,22</span></div>
<div class="c tc" style="left:1501px;top:729px;width:50px;height:21px;"><span class="s">4481,35</span></div>
<div class="btn" style="left:1553px;top:730px;width:21px;height:19px;line-height:18px"><span class="s">X</span></div>
<div class="hl" style="left:8px;top:750px;width:1568px;height:1px;"></div>
<div class="cb" style="left:26px;top:755px"><svg class="ck" viewBox="0 0 13 13"><path d="M2.8 6.6 L5.3 9.2 L10.2 3.4" fill="none" stroke="#222" stroke-width="1.3"/></svg></div>
<div class="c tc" style="left:58px;top:751px;width:502px;height:21px;"><span class="s">RI82500BO0</span></div>
<div class="c tc" style="left:561px;top:751px;width:68px;height:21px;"><span class="s">Put</span></div>
<div class="c tc" style="left:630px;top:751px;width:86px;height:21px;"><span class="s">19.03.2020</span></div>
<div class="c tc" style="left:717px;top:751px;width:101px;height:21px;"><span class="s">1</span></div>
<div class="c tc" style="left:819px;top:751px;width:72px;height:21px;"><span class="s">-4</span></div>
<div class="c tc" style="left:892px;top:751px;width:79px;height:21px;"><span class="s">1130</span></div>
<div class="c tc" style="left:972px;top:751px;width:126px;height:21px;"><span class="s">211,84</span></div>
<div class="c tc" style="left:1099px;top:751px;width:104px;height:21px;"><span class="s">530,36</span></div>
<div class="c tc" style="left:1204px;top:751px;width:55px;height:21px;background:#90ee90;"><span class="s">2398,56</span></div>
<div class="c tc" style="left:1260px;top:751px;width:89px;height:21px;"><span class="s">167,2</span></div>
<div class="c tc" style="left:1350px;top:751px;width:50px;height:21px;"><span class="s">0,39</span></div>
<div class="c tc" style="left:1401px;top:751px;width:55px;height:21px;"><span class="s">-6,2E-05</span></div>
<div class="c tc" style="left:1457px;top:751px;width:43px;height:21px;"><span class="s">-45,52</span></div>
<div class="c tc" style="left:1501px;top:751px;width:50px;height:21px;"><span class="s">2142,95</span></div>
<div class="btn" style="left:1553px;top:752px;width:21px;height:19px;line-height:18px"><span class="s">X</span></div>
<div class="hl" style="left:8px;top:772px;width:1568px;height:1px;"></div>
<div class="cb" style="left:26px;top:777px"><svg class="ck" viewBox="0 0 13 13"><path d="M2.8 6.6 L5.3 9.2 L10.2 3.4" fill="none" stroke="#222" stroke-width="1.3"/></svg></div>
<div class="c tc" style="left:58px;top:773px;width:502px;height:21px;"><span class="s">RI87500BO0</span></div>
<div class="c tc" style="left:561px;top:773px;width:68px;height:21px;"><span class="s">Put</span></div>
<div class="c tc" style="left:630px;top:773px;width:86px;height:21px;"><span class="s">19.03.2020</span></div>
<div class="c tc" style="left:717px;top:773px;width:101px;height:21px;"><span class="s">1</span></div>
<div class="c tc" style="left:819px;top:773px;width:72px;height:21px;"><span class="s">-7</span></div>
<div class="c tc" style="left:892px;top:773px;width:79px;height:21px;"><span class="s">2002,86</span></div>
<div class="c tc" style="left:972px;top:773px;width:126px;height:21px;"><span class="s">196</span></div>
<div class="c tc" style="left:1099px;top:773px;width:104px;height:21px;"><span class="s">1109,97</span></div>
<div class="c tc" style="left:1204px;top:773px;width:55px;height:21px;background:#90ee90;"><span class="s">6250,23</span></div>
<div class="c tc" style="left:1260px;top:773px;width:89px;height:21px;"><span class="s">150,45</span></div>
<div class="c tc" style="left:1350px;top:773px;width:50px;height:21px;"><span class="s">1,34</span></div>
<div class="c tc" style="left:1401px;top:773px;width:55px;height:21px;"><span class="s">-0,000191</span></div>
<div class="c tc" style="left:1457px;top:773px;width:43px;height:21px;"><span class="s">-126,88</span></div>
<div class="c tc" style="left:1501px;top:773px;width:50px;height:21px;"><span class="s">5374,99</span></div>
<div class="btn" style="left:1553px;top:774px;width:21px;height:19px;line-height:18px"><span class="s">X</span></div>
<div class="hl" style="left:8px;top:794px;width:1568px;height:1px;"></div>
<div class="cb" style="left:26px;top:799px"><svg class="ck" viewBox="0 0 13 13"><path d="M2.8 6.6 L5.3 9.2 L10.2 3.4" fill="none" stroke="#222" stroke-width="1.3"/></svg></div>
<div class="c tc" style="left:58px;top:795px;width:502px;height:21px;"><span class="s">FixedProfit</span></div>
<div class="c tc" style="left:1204px;top:795px;width:55px;height:21px;background:#ffb6c1;"><span class="s">-24225</span></div>
<div class="btn" style="left:1553px;top:796px;width:21px;height:19px;line-height:18px"><span class="s">X</span></div>
<div class="hl" style="left:8px;top:816px;width:1568px;height:1px;"></div>
<div class="vl" style="left:57px;top:553px;width:1px;height:269px;"></div>
<div class="vl" style="left:560px;top:553px;width:1px;height:269px;"></div>
<div class="vl" style="left:629px;top:553px;width:1px;height:269px;"></div>
<div class="vl" style="left:716px;top:553px;width:1px;height:269px;"></div>
<div class="vl" style="left:818px;top:553px;width:1px;height:269px;"></div>
<div class="vl" style="left:891px;top:553px;width:1px;height:269px;"></div>
<div class="vl" style="left:971px;top:553px;width:1px;height:269px;"></div>
<div class="vl" style="left:1098px;top:553px;width:1px;height:269px;"></div>
<div class="vl" style="left:1203px;top:553px;width:1px;height:269px;"></div>
<div class="vl" style="left:1259px;top:553px;width:1px;height:269px;"></div>
<div class="vl" style="left:1349px;top:553px;width:1px;height:269px;"></div>
<div class="vl" style="left:1400px;top:553px;width:1px;height:269px;"></div>
<div class="vl" style="left:1456px;top:553px;width:1px;height:269px;"></div>
<div class="vl" style="left:1500px;top:553px;width:1px;height:269px;"></div>
<div class="vl" style="left:1551px;top:553px;width:1px;height:269px;"></div>
<div class="vl" style="left:1575px;top:553px;width:1px;height:269px;"></div>
<div class="" style="left:1576px;top:523px;width:6px;height:292px;background:#f0f0f0"></div>
<div class="" style="left:1576px;top:523px;width:1px;height:292px;background:#fafafa"></div>
<div class="" style="left:1577px;top:538px;width:5px;height:277px;background:#cdcdcd"></div>
<div class="" style="left:1580px;top:533px;width:2px;height:3px;background:#555"></div>
<svg style="position:absolute;left:0;top:440px" width="1582" height="180" viewBox="0 440 1582 180"><rect x="266.6" y="551.2" width="626.1" height="44.5" fill="none" stroke="#e8121c" stroke-width="3.5"/><path d="M1039 459.5 L902 546" stroke="#e8121c" stroke-width="3" fill="none" stroke-linecap="round"/><path d="M894 551 L903.5 540 L908 547.5 Z" fill="#e8121c" stroke="#e8121c" stroke-width="1" stroke-linejoin="round"/></svg>
<div class="" style="left:0px;top:815px;width:1582px;height:11px;background:#d6d6d6"></div>
<div class="m" style="left:5px;top:819.3px;font-size:11.5px">Время обновления 94 мс.</div>
<div class="m" style="left:149.5px;top:819.3px;font-size:11.5px">Profit =</div>
<div class="m" style="left:190.5px;top:819.3px;font-size:11.5px">12510,94</div>
<div class="m" style="left:239.3px;top:819.3px;font-size:11.5px">Delta(Δ)=</div>
<div class="m" style="left:290.6px;top:819.3px;font-size:11.5px">0,52</div>
<div class="m" style="left:313px;top:819.3px;font-size:11.5px">Gamma(Г)=</div>
<div class="m" style="left:381.6px;top:819.3px;font-size:11.5px">-0,000326</div>
<div class="m" style="left:432.3px;top:819.3px;font-size:11.5px">Vega=</div>
<div class="m" style="left:468.6px;top:819.3px;font-size:11.5px">-211,04</div>
<div class="m" style="left:504.3px;top:819.3px;font-size:11.5px">Theta(Θ)=</div>
<div class="m" style="left:558.2px;top:819.3px;font-size:11.5px">8620,04</div>
</body></html>
